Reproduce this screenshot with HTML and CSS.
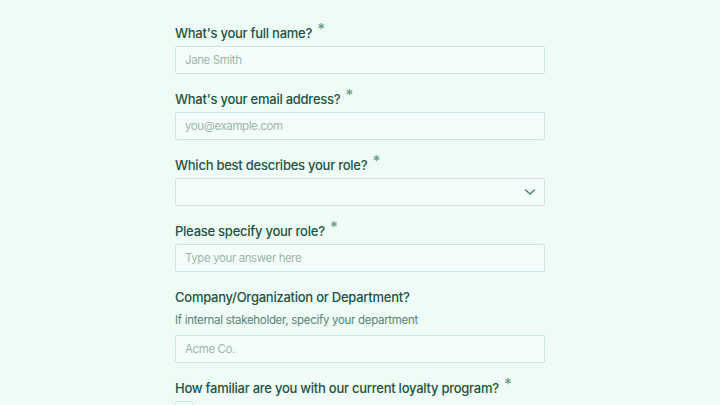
FILE: index.html
```html
<!DOCTYPE html>
<html lang="en">
<head>
<meta charset="UTF-8">
<title>Survey</title>
<link rel="stylesheet" href="styles.css">
</head>
<body>
<form class="form">
	<div class="field">
		<label class="label">What's your full name? <span class="req">*</span></label>
		<input class="input" type="text" placeholder="Jane Smith">
	</div>
	<div class="field">
		<label class="label">What's your email address? <span class="req">*</span></label>
		<input class="input" type="email" placeholder="you@example.com">
	</div>
	<div class="field">
		<label class="label">Which best describes your role? <span class="req">*</span></label>
		<div class="select">
			<svg class="chev" width="12" height="12" viewBox="0 0 12 12"><path d="M1.5 4l4.5 4 4.5-4" fill="none" stroke="#4f7a6b" stroke-width="1.4" stroke-linecap="round" stroke-linejoin="round"/></svg>
		</div>
	</div>
	<div class="field">
		<label class="label">Please specify your role? <span class="req">*</span></label>
		<input class="input" type="text" placeholder="Type your answer here">
	</div>
	<div class="field">
		<label class="label">Company/Organization or Department?</label>
		<p class="help">If internal stakeholder, specify your department</p>
		<input class="input" type="text" placeholder="Acme Co.">
	</div>
	<div class="field">
		<label class="label">How familiar are you with our current loyalty program? <span class="req">*</span></label>
		<div class="option"><span class="box"></span>Not familiar at all</div>
	</div>
</form>
</body>
</html>
```
FILE: styles.css
```css
body {
	margin: 0;
	background: #effcf6;
	font-family: Inter, "Noto Sans", sans-serif;
	color: #215245;
}

.form {
	width: 370px;
	margin: 0 auto;
	padding-top: 23px;
}

.field {
	margin-bottom: 15px;
}

.label {
	display: block;
	font-size: 13px;
	font-weight: 500;
	letter-spacing: -0.25px;
	line-height: 20px;
	margin-bottom: 3px;
}

.req {
	margin-left: 2px;
	color: #6a9c88;
	font-size: 15px;
	line-height: 0;
	vertical-align: 4px;
}

.help {
	margin: 0 0 5px;
	font-size: 11.5px;
	letter-spacing: -0.3px;
	line-height: 20px;
	color: #5a8273;
}

.input,
.select {
	display: block;
	box-sizing: border-box;
	width: 370px;
	height: 28px;
	border: 1px solid #cbe6da;
	border-radius: 2px;
	background: #f3fefa;
	padding: 0 9px;
	font-family: inherit;
	font-size: 11.5px;
	letter-spacing: -0.4px;
	color: #215245;
	outline: none;
}

.input::placeholder {
	color: #9db6ab;
}

.select {
	display: flex;
	align-items: center;
	justify-content: flex-end;
	padding-right: 8px;
}

.option {
	display: flex;
	align-items: center;
	gap: 8px;
	font-size: 12px;
}

.box {
	width: 16px;
	height: 16px;
	border: 1px solid #cbe6da;
	border-radius: 3px;
	background: #f3fefa;
}
```
